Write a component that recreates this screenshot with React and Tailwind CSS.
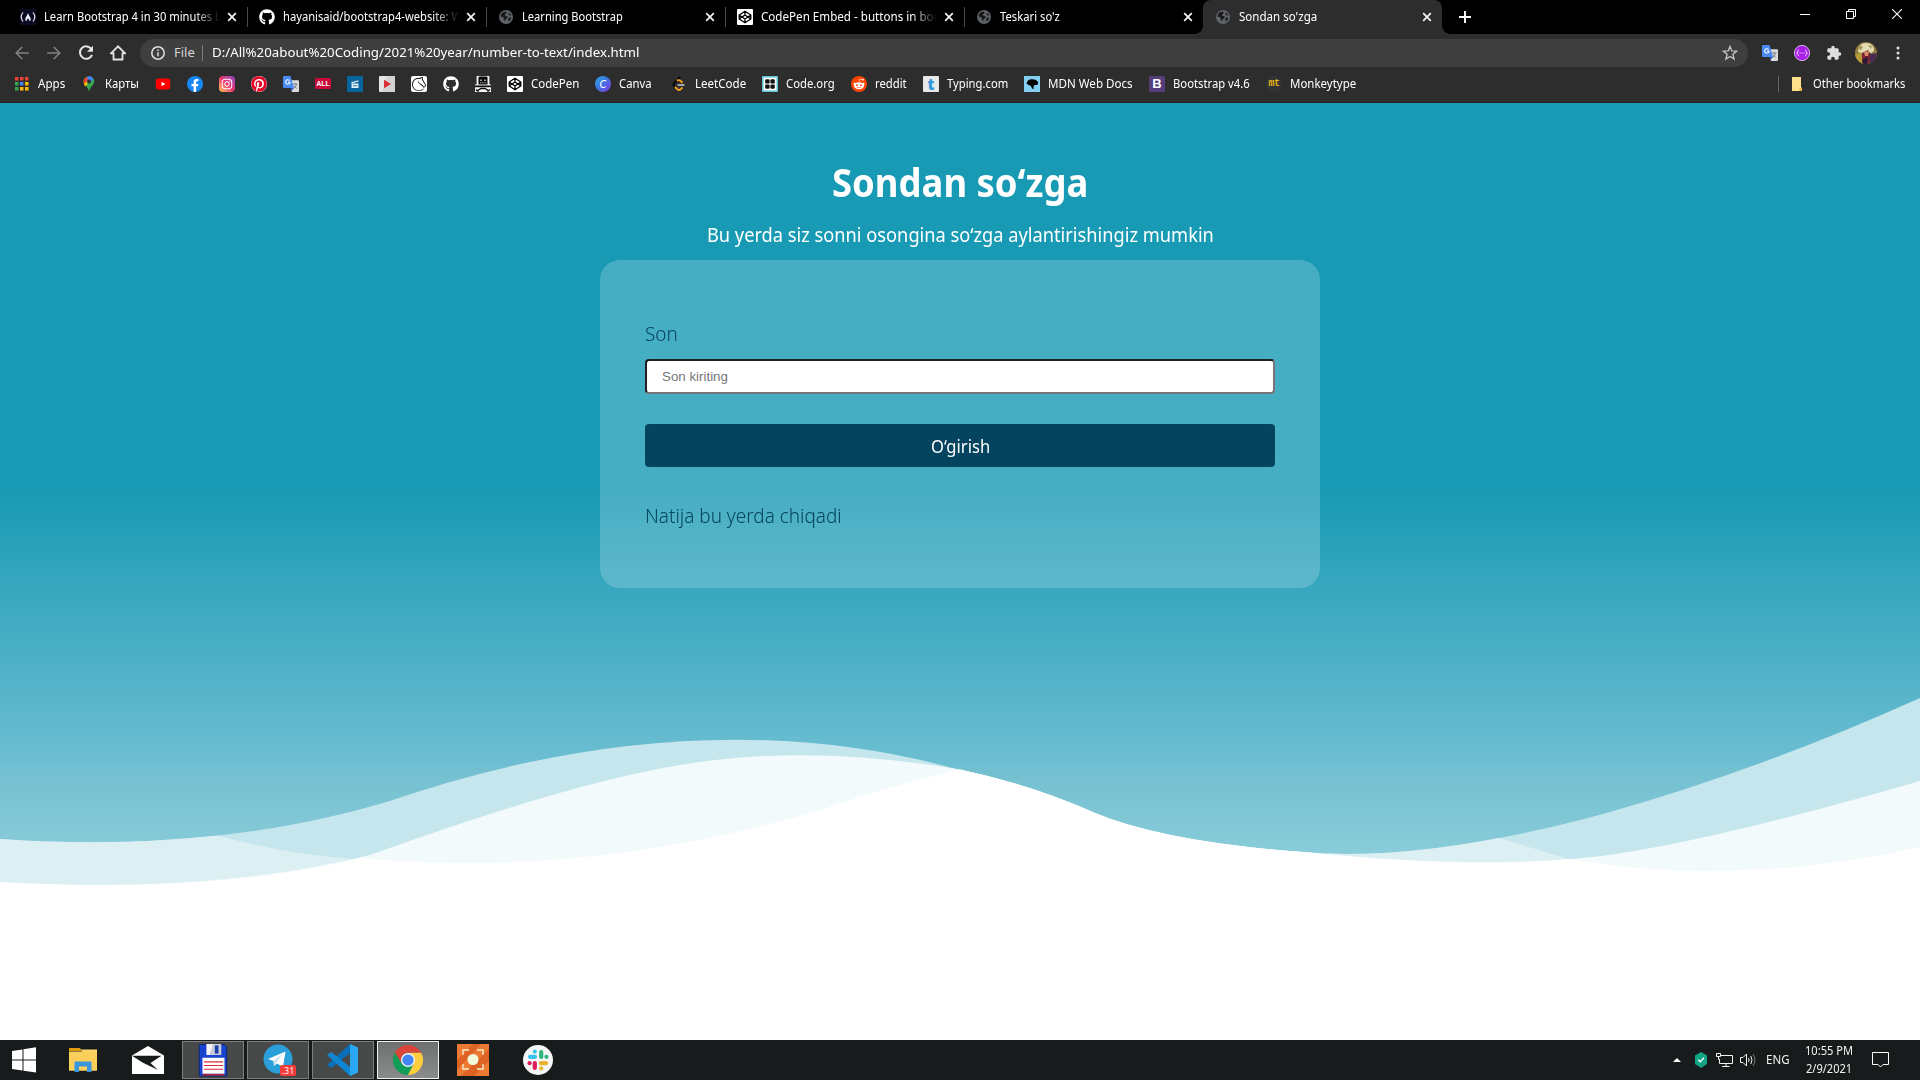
import React, { useLayoutEffect, useRef, useState } from "react";
import { FaGithub, FaFacebookF, FaInstagram, FaPinterest, FaRedditAlien } from "react-icons/fa";
import { SiLichess } from "react-icons/si";
import { MdExtension } from "react-icons/md";

/* Narrows or widens a text so that it fills the given width. */
function Fit({ w, className = "", children }) {
  const ref = useRef(null);
  const [scale, setScale] = useState(1);
  useLayoutEffect(() => {
    setScale(w / ref.current.offsetWidth);
  }, [w]);
  return (
    <span style={{ width: w + "px" }} className={"inline-block text-left whitespace-nowrap " + className}>
      <span ref={ref} style={{ transform: "scaleX(" + scale + ")" }} className="inline-block origin-left">{children}</span>
    </span>
  );
}

const UI = "font-['Noto_Sans','Open_Sans',sans-serif]";

/* ---------- favicons ---------- */
const Globe = () => (
  <svg viewBox="0 0 16 16" className="size-4">
    <circle cx="8" cy="8" r="7" fill="#5f6368" />
    <path d="M3 5.500C4 3.500 6 2.600 8 2.600L8.600 4.600 6.800 5.400 7.200 6.800 9.600 7.300 9.400 9.200 7.600 10 7.200 12.600 5.800 10.600 5.400 8.200 2.600 7.400ZM10.500 3.400 13 5.400 12.200 7 10.800 5.600ZM11 8.500 13.300 8.600C13 10.500 12 11.800 10.600 12.600L10.200 10.800Z" fill="#17181a" />
  </svg>
);
const Camp = () => (
  <svg viewBox="0 0 16 16" className="size-4">
    <rect width="16" height="16" fill="#0a0a23" />
    <path d="M3 3.500Q-.6 8 3 12.500M13 3.500Q16.600 8 13 12.500" stroke="#e8e8f0" strokeWidth="1.200" fill="none" />
    <path d="M8 4C7.600 6 5.200 8.500 5.200 10.200 5.200 11.500 6 12 6.600 12.100 6.600 10.800 7.300 10 8 9.400 8.700 10 9.400 10.800 9.400 12.100 10 12 10.800 11.500 10.800 10.200 10.800 8.500 8.400 6 8 4Z" fill="#e8e8f0" />
  </svg>
);
const CodepenIcon = () => (
  <div className="grid size-4 place-items-center rounded-[1px] bg-white">
    <svg viewBox="0 0 14 14" className="size-[14px]"><path d="M7 1.200 12.800 5V9L7 12.800 1.200 9V5ZM1.200 5 7 9 12.800 5M1.200 9 7 5 12.800 9M7 1.200V5M7 9V12.800" stroke="#000" strokeWidth="1.300" strokeLinejoin="round" fill="none" /></svg>
  </div>
);
const Apps = () => (
  <svg viewBox="0 0 16 16" className="size-4">
    {[["#ea4335", "#ea4335", "#ea4335"], ["#34a853", "#4285f4", "#fbbc05"], ["#34a853", "#fbbc05", "#fbbc05"]].map((r, i) =>
      r.map((c, j) => <rect key={i + "-" + j} x={1 + j * 5} y={1 + i * 5} width="3.500" height="3.500" fill={c} />))}
  </svg>
);
const Pin = () => (
  <svg viewBox="0 0 16 16" className="size-4">
    <path d="M8 .3A5.300 5.300 0 0 0 2.700 5.600C2.700 9 6.900 10.500 8 15.700 9.100 10.500 13.300 9 13.300 5.600A5.300 5.300 0 0 0 8 .3Z" fill="#34a853" />
    <path d="M3.900 2.200 8 5.600 3.900 9.800C3 8.500 2.700 7 2.700 5.600 2.700 4.300 3.100 3.100 3.900 2.200Z" fill="#fbbc04" />
    <path d="M6 .7A5.300 5.300 0 0 1 12.500 2.900L8 7.500 5 4.500Z" fill="#4285f4" />
    <path d="M2.700 5.600Q2.700 2.500 6 .7L7 3.600 3.600 8Z" fill="#ea4335" />
    <path d="M3 7 6.500 6.500 6.600 8 4.500 10.200Q3.300 8.700 3 7Z" fill="#fbbc04" />
    <circle cx="8" cy="5.500" r="1.900" fill="#2d2d2d" />
  </svg>
);
const Youtube = () => (
  <svg viewBox="0 0 16 16" className="size-4">
    <rect x=".8" y="2.500" width="14.400" height="11" rx="2.400" fill="#f00" />
    <path d="M6.500 5.700v4.600L10.400 8z" fill="#fff" />
  </svg>
);
const Facebook = () => (
  <div className="flex size-4 items-end justify-center overflow-hidden rounded-full bg-[#1588f5]"><FaFacebookF className="h-[13px] w-[10px] text-white" /></div>
);
const Insta = () => (
  <div className="grid size-4 place-items-center rounded-[4px] bg-linear-to-tr from-[#fdc44e] via-[#e8306f] to-[#8a3ac8]"><FaInstagram className="size-[12px] text-white" /></div>
);
const Pinterest = () => (
  <div className="size-4 rounded-full bg-white"><FaPinterest className="size-4 text-[#e60023]" /></div>
);
const Translate = () => (
  <svg viewBox="0 0 16 16" className="size-4">
    <path d="M6 4.200h9a1 1 0 0 1 1 1V15a1 1 0 0 1-1 1H9Z" fill="#dcdcdc" />
    <path d="M10 8h4.500M12.200 6.800V8M13.700 8.200Q12.800 11 10.600 12.400M11 9.500 13.800 12.600" stroke="#6a7680" strokeWidth=".9" fill="none" />
    <path d="M1 0h6.500L11 12H1a1 1 0 0 1-1-1V1a1 1 0 0 1 1-1Z" fill="#4a8af4" />
    <path d="M7.600 12H11l-2.400 3Z" fill="#2f5bb8" />
    <path d="M6.500 4.600A2.200 2.200 0 1 0 7 6.200H5" stroke="#fff" strokeWidth="1.100" fill="none" />
  </svg>
);
const AllIcon = () => (
  <div className="flex h-4 w-4 items-center"><div className="grid h-[11px] w-4 place-items-center rounded-[1px] bg-[#c8093a] font-['Liberation_Sans',sans-serif] text-[7px] leading-none font-bold text-white">ALL</div></div>
);
const Clap = () => (
  <svg viewBox="0 0 16 16" className="size-4">
    <rect width="16" height="16" fill="#06649c" />
    <path d="M4.500 7.500h7v4.500h-7ZM4.300 6.200l7-2 .3 1.200-7 2Z" fill="#dcebf4" />
    <path d="M6 9.700h4.300" stroke="#06649c" strokeWidth=".8" />
  </svg>
);
const Play = () => (
  <svg viewBox="0 0 16 16" className="size-4">
    <rect width="16" height="16" rx="1" fill="#e4e4e4" /><path d="M8 0h8v16H3Z" fill="#d2d2d2" />
    <path d="M5 3.800v8.400L12 8z" fill="#dc2f35" />
  </svg>
);
const Lichess = () => (
  <div className="grid size-4 place-items-center rounded-[2px] bg-white"><SiLichess className="size-[14px] text-black" /></div>
);
const Robot = () => (
  <svg viewBox="0 0 16 16" className="size-4">
    <rect width="16" height="16" fill="#f4f4f4" />
    <path d="M3.500 1.500 4.500.5H11.500L12.500 1.500V8.500H3.500Z" fill="#0a0a0a" />
    <path d="M5 4.200H7M9 4.200H11" stroke="#ddd" />
    <path d="M5 6.800h6" stroke="#eee" strokeWidth=".7" strokeDasharray="1.200 .5" />
    <path d="M0 9.500H16V11.200H0Z" fill="#0a0a0a" />
    <path d="M2 15 6 12.500H10L14 15M1 13.500 3.500 15.500M15 13.500 12.500 15.500" stroke="#0a0a0a" strokeWidth="1.400" fill="none" />
    <path d="M0 0H1.600V8.500H0ZM14.400 0H16V8.500H14.400Z" fill="#2d2d2d" />
  </svg>
);
const Canva = () => (
  <div className="grid size-4 place-items-center rounded-full bg-linear-to-br from-[#2aa6dd] via-[#3f6fe0] to-[#7d2ae8] font-['Lato',sans-serif] text-[11px] leading-none italic text-white">C</div>
);
const Leet = () => (
  <svg viewBox="0 0 16 16" className="size-4">
    <path d="M9.300 1 3.200 7.200Q2 8.700 3.200 10.200L4.500 11.500" stroke="#050505" strokeWidth="1.900" fill="none" />
    <path d="M5.800 4.700 7.300 4.200Q8.500 3.800 9.500 4.900L11.500 6.800M4 10.800 6.300 13.200Q8 14.800 9.600 13.300L11.500 11.400" stroke="#f7a01b" strokeWidth="1.900" fill="none" />
    <path d="M6.500 9h7" stroke="#b3b3b3" strokeWidth="1.800" />
  </svg>
);
const CodeOrg = () => (
  <svg viewBox="0 0 16 16" className="size-4">
    <rect width="16" height="16" fill="#5bc3d3" /><rect x="1.500" y="1.500" width="13" height="13" fill="#fff" />
    {[3.200, 8.400].map((x) => [3.200, 8.400].map((y) => <rect key={x + "-" + y} x={x} y={y} width="4.400" height="4.400" rx="1.200" fill="#111" />))}
  </svg>
);
const Reddit = () => (
  <div className="grid size-4 place-items-center rounded-full bg-[#ff4500]"><FaRedditAlien className="size-[12px] text-white" /></div>
);
const Typing = () => (
  <div className="grid size-4 place-items-center rounded-[1px] bg-[#e6e8ea] font-['Open_Sans',sans-serif] text-[15px] leading-[14px] font-extrabold text-[#3597db]">t</div>
);
const Mdn = () => (
  <svg viewBox="0 0 16 16" className="size-4">
    <rect width="16" height="16" fill="#83d0f2" />
    <path d="M2.500 7.500Q3 4 7 3.300 12 2.600 14.200 6.500L13.400 9 11 9 9.500 10.300 9.800 13.500 8 12.300 6.500 9.500 5 9.300Z" fill="#000" />
  </svg>
);
const Boot = () => (
  <div className="grid size-4 place-items-center rounded-[2px] bg-[#563d7c] font-['Liberation_Sans',sans-serif] text-[13px] leading-none font-bold text-white">B</div>
);
const Monkey = () => (
  <div className="grid size-4 place-items-center rounded-full bg-[#323437] font-['Liberation_Mono',monospace] text-[10px] leading-[14px] font-bold tracking-[-0.5px] text-[#e2b714]">mt</div>
);

/* ---------- tab strip ---------- */
const tabs = [
  { icon: <Camp />, text: "Learn Bootstrap 4 in 30 minutes b", w: 178, fade: true },
  { icon: <FaGithub className="size-4 text-white" />, text: "hayanisaid/bootstrap4-website: W", w: 179, fade: true },
  { icon: <Globe />, text: "Learning Bootstrap", w: 101 },
  { icon: <CodepenIcon />, text: "CodePen Embed - buttons in boo", w: 180, fade: true },
  { icon: <Globe />, text: "Teskari so'z", w: 60 },
  { icon: <Globe />, text: "Sondan so'zga", w: 78, active: true },
];
const Close = () => (
  <svg viewBox="0 0 10 10" className="size-[10px] shrink-0"><path d="M1.200 1.200 8.800 8.800M8.800 1.200 1.200 8.800" stroke="#f5f5f5" strokeWidth="1.700" /></svg>
);

function TabStrip() {
  return (
    <div className="flex h-[34px] bg-black pl-2">
      {tabs.map((t, i) => (
        <div key={i} className={"relative flex h-[34px] w-[239px] items-center pr-[10px] pl-3 " + (t.active ? "rounded-t-lg bg-[#2d2d2d]" : "")}>
          {t.active && (
            <>
              <div className="absolute bottom-0 -left-2 size-2 bg-[radial-gradient(circle_at_0_0,transparent_7.5px,#2d2d2d_8px)]" />
              <div className="absolute -right-2 bottom-0 size-2 bg-[radial-gradient(circle_at_100%_0,transparent_7.5px,#2d2d2d_8px)]" />
            </>
          )}
          {t.icon}
          <div className={"ml-2 h-[18px] w-[176px] overflow-hidden text-[12px] leading-[18px] text-white " + (t.fade ? "[mask-image:linear-gradient(to_right,black_150px,transparent_176px)]" : "")}>
            <Fit w={t.w}>{t.text}</Fit>
          </div>
          <div className="ml-auto flex"><Close /></div>
          {i < 4 && <div className="absolute top-[7px] -right-px h-5 w-px bg-[#4a4a4a]" />}
        </div>
      ))}
      <div className="flex w-[45px] items-center justify-end">
        <svg viewBox="0 0 14 14" className="mr-[15px] size-[14px]"><path d="M7 1v12M1 7h12" stroke="#fff" strokeWidth="1.900" /></svg>
      </div>
      <div className="mr-[18px] ml-auto flex h-7 items-center gap-9">
        <svg viewBox="0 0 10 10" className="size-[10px]"><path d="M0 5.500h10" stroke="#fff" /></svg>
        <svg viewBox="0 0 10 10" className="size-[10px] overflow-visible"><path d="M.5 2.500h7v7h-7ZM2.500 2.500v-2h7v7h-2" stroke="#fff" fill="none" /></svg>
        <svg viewBox="0 0 10 10" className="size-[10px]"><path d="M0 0 10 10M10 0 0 10" stroke="#fff" strokeWidth="1.100" /></svg>
      </div>
    </div>
  );
}

/* ---------- address bar ---------- */
const Arrow = ({ className = "" }) => (
  <svg viewBox="0 0 14 14" className={"size-[14px] " + className}><path d="M13.800 7H1.500M7.200 1 1.200 7l6 6" stroke="#808183" strokeWidth="1.600" fill="none" /></svg>
);

function AddressBar() {
  return (
    <div className="flex h-9 items-center pt-0.5 pl-[15px]">
      <Arrow />
      <Arrow className="ml-[18px] rotate-180" />
      <svg viewBox="0 0 16 16" className="ml-[17px] size-4"><path d="M13.500 4.300A6.200 6.200 0 1 0 14 9.800" stroke="#e4e4e4" strokeWidth="2" fill="none" /><path d="M15 .8v6H9Z" fill="#e4e4e4" /></svg>
      <svg viewBox="0 0 16 16" className="ml-4 size-4"><path d="M1 8.300 8 1.300 15 8.300H12.500V14.500H3.500V8.300Z" stroke="#e4e4e4" strokeWidth="1.800" fill="none" /></svg>
      <div className="ml-[14px] flex h-7 w-[1608px] items-center rounded-full bg-[#3f3f3f] pl-[11px]">
        <svg viewBox="0 0 14 14" className="size-[14px]"><circle cx="7" cy="7" r="6.200" stroke="#e0e0e0" strokeWidth="1.500" fill="none" /><path d="M7 6.300v4M7 3.600v1.500" stroke="#e0e0e0" strokeWidth="1.500" /></svg>
        <Fit w={21} className="mb-0.5 ml-[9px] text-[13px] leading-5 text-[#d5d5d5]">File</Fit>
        <div className="mr-[9px] ml-[7px] h-4 w-px bg-[#7b7b7b]" />
        <Fit w={427} className="mb-0.5 text-[13px] leading-5 text-white">D:/All%20about%20Coding/2021%20year/number-to-text/index.html</Fit>
        <svg viewBox="0 0 16 16" className="mr-[10px] ml-auto size-4"><path d="M8 1.400 9.800 5.900 14.600 6.200 10.900 9.300 12.100 14 8 11.400 3.900 14 5.100 9.300 1.400 6.200 6.200 5.900Z" stroke="#c8c8c8" strokeWidth="1.300" fill="none" /></svg>
      </div>
      <div className="ml-[14px] flex items-center gap-4">
        <Translate />
        <svg viewBox="0 0 16 16" className="size-4"><circle cx="8" cy="8" r="7.600" fill="#a81ee6" stroke="#f0d6fb" strokeWidth=".8" /><path d="M5 5Q3.800 5 3.800 6.500T2.600 8Q3.800 8 3.800 9.500T5 11M11 5Q12.200 5 12.200 6.500T13.400 8Q12.200 8 12.200 9.500T11 11" stroke="#f7e6ff" fill="none" strokeWidth=".9" /><path d="M5.600 8h5" stroke="#f7e6ff" strokeDasharray="1 .9" /></svg>
        <MdExtension className="size-4 text-[#dedede]" />
        <svg viewBox="0 0 22 22" className="-mx-[3px] size-[22px]">
          <clipPath id="av"><circle cx="11" cy="11" r="11" /></clipPath>
          <g clipPath="url(#av)">
            <rect width="22" height="22" fill="#8d7a3c" />
            <path d="M3 10Q3 1 11 1T19 9L16 11 6 11Z" fill="#e2dcb4" />
            <path d="M5 3 8 5 6 8 3 7ZM13 3 17 4 16 7Z" fill="#a59a56" />
            <path d="M0 13 6 10 8 22H0Z" fill="#b99c35" />
            <path d="M7 11 13 8 17 14 14 22 7 21Z" fill="#7a2434" />
            <path d="M9 10 14 9 13 14 10 14Z" fill="#d98f6a" />
            <path d="M15 12 22 11V20L15 22Z" fill="#4a2d55" />
            <path d="M8 17 13 15 12 22H8Z" fill="#2b1a3a" />
          </g>
        </svg>
        <svg viewBox="0 0 16 16" className="size-4"><circle cx="8" cy="3" r="1.500" fill="#e4e4e4" /><circle cx="8" cy="8" r="1.500" fill="#e4e4e4" /><circle cx="8" cy="13" r="1.500" fill="#e4e4e4" /></svg>
      </div>
    </div>
  );
}

/* ---------- bookmarks ---------- */
const marks = [
  [<Apps />, "Apps", 27], [<Pin />, "Карты", 34], [<Youtube />], [<Facebook />], [<Insta />], [<Pinterest />], [<Translate />],
  [<AllIcon />], [<Clap />], [<Play />], [<Lichess />], [<FaGithub className="size-4 text-white" />], [<Robot />],
  [<CodepenIcon />, "CodePen", 48], [<Canva />, "Canva", 33, "mr-[3px]"], [<Leet />, "LeetCode", 51], [<CodeOrg />, "Code.org", 49],
  [<Reddit />, "reddit", 32], [<Typing />, "Typing.com", 61], [<Mdn />, "MDN Web Docs", 85], [<Boot />, "Bootstrap v4.6", 77],
  [<Monkey />, "Monkeytype", 66],
];

function Bookmarks() {
  return (
    <div className="flex h-[33px] items-center gap-4 border-b border-[#1d1d1d] pr-[15px] pb-[5px] pl-[14px]">
      {marks.map(([icon, label, w, extra], i) => (
        <div key={i} className={"flex items-center gap-2 " + (extra || "")}>
          <div className="size-4">{icon}</div>
          {label && <Fit w={w} className="text-[12px] leading-4 text-white">{label}</Fit>}
        </div>
      ))}
      <div className="ml-auto flex items-center">
        <div className="mr-[12px] h-4 w-px bg-[#646464]" />
        <svg viewBox="0 0 12 16" className="mr-[10px] h-4 w-3"><path d="M1 1h9v10l1 1v3H1Z" fill="#ffe08a" /><path d="M8.500 12h2.500v3H8.500Z" fill="#e8b93c" /></svg>
        <Fit w={92} className="text-[12px] leading-4 text-white">Other bookmarks</Fit>
      </div>
    </div>
  );
}

/* ---------- page ---------- */
function Waves() {
  return (
    <svg viewBox="0 103 1920 937" preserveAspectRatio="none" className="col-start-1 row-start-1 h-[937px] w-full">
      <path d="M0 839Q211 853.800 385 802.500Q694 696 960 770Q1033 785 1095 813Q1165 842 1303 852Q1422.500 862.700 1603 814Q1760 770 1920 698V1040H0Z" fill="#c5e6ec" />
      <path d="M0 839Q114 847 217 835.500Q290 855 355 859L345 930H0Z" fill="#dceff3" />
      <path d="M1303 852Q1386.600 859.500 1499 838L1572 860V900H1303Z" fill="#dceff3" />
      <path d="M0 882Q212 894.400 370 855Q566 784 680 765Q807 743.500 960 769.500Q1033 785 1095 813Q1165 842 1303 852Q1489 870.600 1609 855Q1720 839 1920 781V1040H0Z" fill="#f2fafc" />
      <path d="M0 882Q212 894.400 361 858Q410 863 465 863Q643 863 820 810Q885 787 960 769.500Q1033 785 1095 813Q1165 842 1303 852Q1465 869 1572 859Q1635 871 1707 871Q1815 871 1920 847V1040H0Z" fill="#fff" />
    </svg>
  );
}

function Page() {
  return (
    <main className="grid h-[937px] bg-[linear-gradient(to_bottom,#189ab4_0px,#189ab4_385px,#6dbed2_661px,#72bfd0_664px,#8accda_752px)] font-['Noto_Sans',sans-serif]">
      <Waves />
      <div className="col-start-1 row-start-1 flex flex-col items-center pt-[47px] text-white">
        <h1 className="h-[64px] text-[39px] leading-[64px] font-bold"><Fit w={256}>Sondan so‘zga</Fit></h1>
        <p className="mt-[3px] h-9 text-[20px] leading-9"><Fit w={507}>Bu yerda siz sonni osongina so‘zga aylantirishingiz mumkin</Fit></p>
        <section className="mt-[7px] flex h-[328px] w-[720px] flex-col rounded-[20px] bg-white/20 px-[45px] pt-[58px] text-[#05445e]">
          <label className="h-8 text-[20px] leading-8 font-[350]"><Fit w={33}>Son</Fit></label>
          <input placeholder="Son kiriting" className="mt-[9px] h-[35px] w-full rounded border-2 border-t-[#1f1f1f] border-r-[#767676] border-b-[#767676] border-l-[#1f1f1f] bg-white px-[15px] font-['Liberation_Sans',sans-serif] text-[13.33px] placeholder:text-[#757575]" />
          <button className="mt-[30px] h-[43px] w-full rounded-[4px] bg-[#05445e] pt-px text-[18px] leading-none text-white"><Fit w={59}>O‘girish</Fit></button>
          <p className="mt-[33px] h-8 text-[20px] leading-8 font-[350]"><Fit w={197}>Natija bu yerda chiqadi</Fit></p>
        </section>
      </div>
    </main>
  );
}

/* ---------- taskbar ---------- */
const TaskBtn = ({ active, children }) => (
  <div className={"mr-[3px] grid h-[38px] w-[62px] place-items-center border " + (active ? "border-[#f0f0f0] bg-linear-to-b from-[#6e6f6f] to-[#8b8c8c]" : "border-[#7d7f7f] bg-[#474949]")}>{children}</div>
);

function Taskbar() {
  return (
    <footer className="flex h-10 items-center bg-[#181b1c] pl-3 text-[#f2f2f2]">
      <svg viewBox="0 0 24 26" className="h-[26px] w-6"><path d="M0 4 10.500 2.400V12.400H0ZM11.500 2.200 24 .3V12.400H11.500ZM0 13.500H10.500V23.400L0 22ZM11.500 13.500H24V25.500L11.500 23.700Z" fill="#fff" /></svg>
      <svg viewBox="0 0 28 26" className="ml-[33px] h-[26px] w-7"><path d="M0 1H11L13 4H0Z" fill="#e09a08" /><path d="M0 4.500H13L12 2.500H28V23.500H0Z" fill="#fdd568" /><path d="M0 5H28V23.500H0Z" fill="#fbd05a" /><path d="M5.500 14.500H22.500V25H18V19.500H10V25H5.500Z" fill="#3a96dd" /></svg>
      <svg viewBox="0 0 32 28" className="ml-[35px] h-7 w-8"><path d="M0 9.500 16 0 32 9.500V28H0Z" fill="#fff" /><path d="M0 9.800H29.500L18.500 17 26 24 10.500 16.500 0 9.800Z" fill="#181b1c" /></svg>
      <div className="ml-[18px] flex">
        <TaskBtn>
          <svg viewBox="0 0 32 36" className="h-[33px] w-8"><path d="M1 .5H28L31 3.500V35H1Z" fill="#1743d0" stroke="#0a2370" /><rect x="9" y="0" width="16" height="12" fill="#c9cbd4" /><path d="M9 0H16L12 12H9Z" fill="#f4f4f8" /><rect x="18" y="1.500" width="4" height="9" fill="#1c3fae" /><rect x="4.500" y="15" width="24" height="17.500" fill="#fff" /><path d="M6 19.500H27M6 23.500H27M6 27.500H27" stroke="#d92a38" strokeWidth="1.200" /><path d="M4.500 32.500h24v2h-24Z" fill="#a8283a" /></svg>
        </TaskBtn>
        <TaskBtn>
          <div className="relative size-[34px]">
            <svg viewBox="0 0 34 34" className="size-[34px]"><circle cx="17" cy="16" r="14.500" fill="#2a9fd9" /><path d="M7 16 24.500 8.500 22 24 16 20.500 13 23 12.500 18Z" fill="#fff" /><path d="M12.500 18 21.500 11 15 19.500 13 23Z" fill="#c3d9e8" /></svg>
            <div className="absolute right-[-1px] bottom-[1px] grid h-[11px] w-4 place-items-center rounded-[2px] bg-[#f33c3a] font-['Open_Sans',sans-serif] text-[9px] leading-none text-white">.31</div>
          </div>
        </TaskBtn>
        <TaskBtn>
          <svg viewBox="0 0 32 34" className="h-[34px] w-8"><path d="M23 1 31 4.500V29.500L23 33Z" fill="#29a8f2" /><path d="M23 1V10L4.500 25 0 22Z" fill="#0a6fb8" /><path d="M23 33V24L4.500 9 0 12Z" fill="#0f86d2" /></svg>
        </TaskBtn>
        <TaskBtn active>
          <svg viewBox="0 0 32 32" className="size-8"><path d="M3 8.500A15 15 0 0 0 16 31L22 19.500 16 22.500 10 19.500Z" fill="#0f9d58" /><path d="M29 8.500A15 15 0 0 1 16 31L22 19.500 22 12.500 16 9Z" fill="#ffcd40" /><path d="M3 8.500A15 15 0 0 1 29 8.500H16A7.500 7.500 0 0 0 9.500 19Z" fill="#db4437" /><circle cx="16" cy="16" r="7" fill="#f1f1f1" /><circle cx="16" cy="16" r="5.600" fill="#4285f4" /></svg>
        </TaskBtn>
      </div>
      <svg viewBox="0 0 32 32" className="ml-[15px] size-8"><rect width="32" height="32" fill="#ec7a33" /><path d="M0 16 16 0H24L0 26ZM4 32 32 5V17L17 32Z" fill="#dd6324" /><path d="M6 11V6H12M20 6H26V11M26 20V25H20M12 25H6V20" stroke="#f6eacb" strokeWidth="1.400" fill="none" /><circle cx="16" cy="15.500" r="5.500" fill="#f1f8dc" /></svg>
      <svg viewBox="0 0 30 30" className="ml-[34px] size-[30px]"><circle cx="15" cy="15" r="15" fill="#f6f6f6" /><g strokeWidth="4.200" strokeLinecap="round" fill="none"><path d="M7 11.800H12" stroke="#36c5f0" /><path d="M18.200 7V12" stroke="#2eb67d" /><path d="M18 18.200H23" stroke="#ecb22e" /><path d="M11.800 18V23" stroke="#e01e5a" /><path d="M11.800 6.600h.01" stroke="#36c5f0" /><path d="M23.400 11.800h.01" stroke="#2eb67d" /><path d="M18.200 23.400h.01" stroke="#ecb22e" /><path d="M6.600 18.200h.01" stroke="#e01e5a" /></g></svg>
      <div className="mr-[31px] ml-auto flex items-center">
        <svg viewBox="0 0 8 4" className="h-1 w-2"><path d="M0 4 4 0 8 4Z" fill="#fff" /></svg>
        <svg viewBox="0 0 12 16" className="ml-[14px] h-4 w-3"><path d="M6 0 12 3.500V12L6 16 0 12V3.500Z" fill="#12a284" /><path d="M3.200 7.800 5.300 9.800 9 5.800" stroke="#fff" strokeWidth="1.300" fill="none" /></svg>
        <svg viewBox="0 0 17 14" className="ml-[9px] h-[14px] w-[17px]"><path d="M5 2.500H16.500V10.500H3.500V6M10 10.500V13.500M6 13.500H13.500M.5.500H4.500V3.500H.5ZM2.500 3.500V6.500H3.500" stroke="#f2f2f2" fill="none" /></svg>
        <svg viewBox="0 0 17 16" className="ml-[7px] h-4 w-[17px]"><path d="M.5 5.500H3L6.500 2V14L3 10.500H.5Z" stroke="#f2f2f2" fill="none" /><path d="M8.500 6Q9.800 8 8.500 10M10.800 4Q13.200 8 10.800 12" stroke="#f2f2f2" fill="none" /><path d="M13 2Q17 8 13 14" stroke="#777" fill="none" /></svg>
        <Fit w={24} className="ml-[9px] text-[12px] leading-4">ENG</Fit>
        <div className="ml-[15px] flex w-[48px] flex-col items-center text-[12px] leading-[18px]">
          <Fit w={48}>10:55 PM</Fit>
          <Fit w={46}>2/9/2021</Fit>
        </div>
        <svg viewBox="0 0 17 16" className="ml-[19px] h-4 w-[17px]"><path d="M.5.500H16.500V12.500H11L8.500 15 6 12.500H.5Z" stroke="#fff" fill="none" /></svg>
      </div>
    </footer>
  );
}

export default function App() {
  return (
    <div className="flex h-[1080px] w-[1920px] flex-col overflow-hidden bg-white">
      <header className={"h-[103px] bg-[#2d2d2d] " + UI}>
        <TabStrip />
        <AddressBar />
        <Bookmarks />
      </header>
      <Page />
      <div className={UI}><Taskbar /></div>
    </div>
  );
}
